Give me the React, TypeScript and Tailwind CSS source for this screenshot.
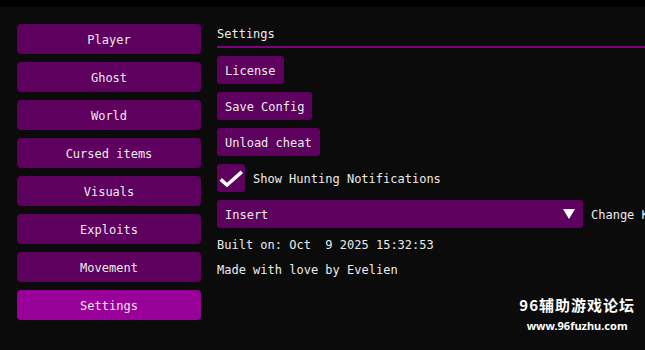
import React from "react";

const items = ["Player", "Ghost", "World", "Cursed items", "Visuals", "Exploits", "Movement", "Settings"];

export default function App() {
  return (
    <div
      className="relative w-[645px] h-[350px] overflow-hidden bg-[#0b0b0b] text-[#ebebeb] text-[12px]"
      style={{ fontFamily: '"DejaVu Sans Mono", "Liberation Mono", monospace' }}
    >
      <div className="h-[7px] bg-black" />
      <div className="flex pt-[17px] pl-[17px]">
        <div className="flex flex-col gap-[8px] w-[184px] shrink-0">
          {items.map((it) => (
            <div
              key={it}
              className={
                "h-[30px] pt-[2px] rounded-[4px] flex items-center justify-center " +
                (it === "Settings" ? "bg-[#990099]" : "bg-[#5e005e]")
              }
            >
              {it}
            </div>
          ))}
        </div>
        <div className="ml-[16px] flex-1 flex flex-col gap-[8px] whitespace-nowrap">
          <div className="flex flex-col">
            <div className="h-[22px] leading-[20px]">Settings</div>
            <div className="h-[2px] bg-[#800080]" />
          </div>
          <div className="flex">
            <div className="h-[28px] pt-[2px] px-[8px] rounded-[3px] bg-[#5e005e] flex items-center">License</div>
          </div>
          <div className="flex">
            <div className="h-[28px] pt-[2px] px-[8px] rounded-[3px] bg-[#5e005e] flex items-center">Save Config</div>
          </div>
          <div className="flex">
            <div className="h-[28px] pt-[2px] px-[8px] rounded-[3px] bg-[#5e005e] flex items-center">Unload cheat</div>
          </div>
          <div className="flex items-center gap-[8px]">
            <div className="w-[28px] h-[28px] rounded-[3px] bg-[#5e005e] flex items-center justify-center">
              <svg width="28" height="28" viewBox="0 0 28 28">
                <path d="M5 16.5 L10 21 L23.5 9" fill="none" stroke="#ffffff" strokeWidth="3.5" strokeLinecap="square" strokeLinejoin="miter" />
              </svg>
            </div>
            <span className="pt-[2px]">Show Hunting Notifications</span>
          </div>
          <div className="flex items-center gap-[8px]">
            <div className="w-[366px] h-[28px] rounded-[3px] bg-[#5e005e] flex items-center justify-between pl-[8px] pr-[8px] shrink-0">
              <span className="pt-[2px]">Insert</span>
              <svg width="12" height="10" viewBox="0 0 12 10">
                <path d="M0 0 L12 0 L6 10 Z" fill="#ffffff" />
              </svg>
            </div>
            <span className="pt-[2px]">Change Key</span>
          </div>
          <div className="leading-[17px] pt-[1px] flex flex-col gap-[8px]">
            <div className="whitespace-pre">Built on: Oct  9 2025 15:32:53</div>
            <div>Made with love by Evelien</div>
          </div>
        </div>
      </div>
      <div
        className="absolute right-[10px] top-[296px] flex flex-col items-center text-white font-bold"
        style={{ fontFamily: '"Noto Sans CJK SC", "Noto Sans", sans-serif' }}
      >
        <div className="text-[15px] leading-[18px] tracking-[1px]">96辅助游戏论坛</div>
        <div className="text-[11px] leading-[14px] mt-[5px]" style={{ fontFamily: '"Noto Sans", sans-serif' }}>www.96fuzhu.com</div>
      </div>
    </div>
  );
}
